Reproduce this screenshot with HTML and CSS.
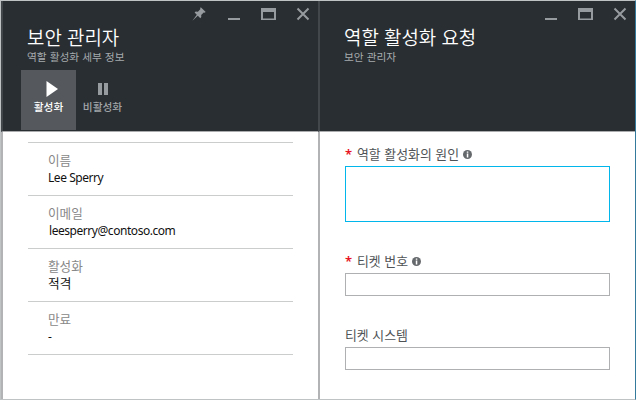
FILE: index.html
```html
<!DOCTYPE html>
<html lang="ko">
<head>
<meta charset="utf-8">
<title>보안 관리자</title>
<link rel="stylesheet" href="styles.css">
</head>
<body>
<main class="workspace">
  <section class="blade blade-details">
    <header class="blade-header">
      <div class="window-controls">
        <svg class="control pin" width="14" height="14" viewBox="0 0 14 14"><path d="M8.8 0.2 13.7 5.1 12.4 5.7 11.7 5.4 9.2 8 9.3 10.1 8.3 11.2 5.8 8.8 0.4 13.8 4.8 7.7 2.6 5.5 3.7 4.6 5.9 4.7 8.5 2.1 8.1 1.3Z"/></svg>
        <svg class="control" width="14" height="14" viewBox="0 0 14 14"><path d="M1 11h12v2H1z"/></svg>
        <svg class="control" width="15" height="14" viewBox="0 0 15 14"><path fill-rule="evenodd" d="M0 1h15v12H0zM2 5v6.5h11V5z"/></svg>
        <svg class="control" width="14" height="14" viewBox="0 0 14 14"><path class="cross" d="M1.5 1.5 12.5 12.5M12.5 1.5 1.5 12.5"/></svg>
      </div>
      <h1 class="title">보안 관리자</h1>
      <p class="subtitle">역할 활성화 세부 정보</p>
      <nav class="commands">
        <button class="command active">
          <svg width="12" height="16" viewBox="0 0 12 16"><path d="M0.5 0 12 8 0.5 16Z"/></svg>
          <span>활성화</span>
        </button>
        <button class="command">
          <svg width="10" height="16" viewBox="0 0 10 16"><path d="M0 2h4v12H0zM6 2h4v12H6z"/></svg>
          <span>비활성화</span>
        </button>
      </nav>
    </header>
    <dl class="properties">
      <div class="property"><dt>이름</dt><dd>Lee Sperry</dd></div>
      <div class="property"><dt>이메일</dt><dd class="email">leesperry@contoso.com</dd></div>
      <div class="property"><dt>활성화</dt><dd class="korean">적격</dd></div>
      <div class="property"><dt>만료</dt><dd>-</dd></div>
    </dl>
  </section>
  <section class="blade blade-request">
    <header class="blade-header">
      <div class="window-controls">
        <svg class="control" width="14" height="14" viewBox="0 0 14 14"><path d="M1 11h12v2H1z"/></svg>
        <svg class="control" width="15" height="14" viewBox="0 0 15 14"><path fill-rule="evenodd" d="M0 1h15v12H0zM2 5v6.5h11V5z"/></svg>
        <svg class="control" width="14" height="14" viewBox="0 0 14 14"><path class="cross" d="M1.5 1.5 12.5 12.5M12.5 1.5 1.5 12.5"/></svg>
      </div>
      <h1 class="title">역할 활성화 요청</h1>
      <p class="subtitle">보안 관리자</p>
    </header>
    <form class="request-form">
      <div class="field">
        <div class="label"><span class="required">*</span><label for="reason">역할 활성화의 원인</label>
          <svg class="info" width="9" height="9" viewBox="0 0 9 9"><circle cx="4.5" cy="4.5" r="4.5"/><path d="M3.8 1.5h1.5v1.3H3.8zM3.8 3.6h1.5v3.8H3.8z"/></svg></div>
        <textarea id="reason" class="input reason"></textarea>
      </div>
      <div class="field">
        <div class="label"><span class="required">*</span><label for="ticket">티켓 번호</label>
          <svg class="info" width="9" height="9" viewBox="0 0 9 9"><circle cx="4.5" cy="4.5" r="4.5"/><path d="M3.8 1.5h1.5v1.3H3.8zM3.8 3.6h1.5v3.8H3.8z"/></svg></div>
        <input id="ticket" class="input" type="text">
      </div>
      <div class="field">
        <div class="label"><label for="system">티켓 시스템</label></div>
        <input id="system" class="input" type="text">
      </div>
    </form>
  </section>
</main>
</body>
</html>
```
FILE: styles.css
```css
* { box-sizing: border-box; margin: 0; padding: 0; }

body {
  font-family: "Noto Sans CJK KR", sans-serif;
  background: #fff;
}

.workspace {
  display: grid;
  grid-template-columns: 317px 317px;
  width: 636px;
  height: 400px;
  overflow: hidden;
  border: 1px solid #c0c3c3;
  border-right-color: #337a9c;
}

.blade {
  border-left: 2px solid #b2b3b4;
}

.blade-header {
  height: 131px;
  margin-left: -2px;
  border-left: 2px solid #41474b;
  border-bottom: 1px solid #aaacae;
  background: #292e32;
  color: #fff;
}

.window-controls {
  display: flex;
  justify-content: flex-end;
  align-items: center;
  height: 26px;
  padding-right: 8px;
  gap: 20px;
}

.control { fill: #969b9f; }
.pin { margin-right: 1px; }
.cross { fill: none; stroke: #969b9f; stroke-width: 2; }

.title {
  height: 22px;
  padding-left: 24px;
  line-height: 20px;
  font-size: 18.9px;
  font-weight: 350;
  white-space: nowrap;
}

.subtitle {
  height: 15px;
  padding-left: 24px;
  line-height: 16px;
  font-size: 10.7px;
  color: #a6abae;
}

.commands {
  display: flex;
  margin: 6px 0 0 18px;
}

.command {
  display: flex;
  flex-direction: column;
  align-items: center;
  width: 55px;
  height: 60px;
  padding-top: 11px;
  border: 0;
  background: none;
  color: #a0a4a7;
  fill: #969b9f;
  font: 500 10.7px/16px "Noto Sans CJK KR", sans-serif;
  white-space: nowrap;
}

.command + .command { width: 53px; }
.command span { margin-top: 2px; }
.command.active { background: #55585d; color: #fff; fill: #fff; }
.command.active svg { margin-left: 6px; }

.properties {
  width: 265px;
  margin: 10px 0 0 25px;
  border-top: 1px solid #cbcccc;
}

.property {
  height: 53px;
  padding: 8px 0 0 20px;
  border-bottom: 1px solid #cbcccc;
}

.property dt {
  height: 18px;
  line-height: 18px;
  font-size: 12.6px;
  color: #888;
}

.property dd {
  height: 18px;
  line-height: 17px;
  font-family: "Noto Sans", "Noto Sans CJK KR", sans-serif;
  font-size: 12px;
  letter-spacing: -0.45px;
  color: #111;
}

.property .email { padding-left: 1px; }

.property .korean {
  font-size: 12.7px;
  letter-spacing: 0;
}

.request-form {
  padding: 13px 25px 0;
}

.field { margin-bottom: 30px; }

.label {
  display: flex;
  align-items: center;
  height: 21px;
  padding-bottom: 3px;
  line-height: 18px;
  font-size: 12.9px;
  color: #505356;
}

.required {
  width: 12px;
  color: #e81123;
  font: 600 13px/18px "Noto Sans", sans-serif;
}

.info { margin-left: 4px; fill: #66696c; }
.info path { fill: #fff; }

.input {
  display: block;
  width: 265px;
  height: 23px;
  border: 1px solid #afb0b1;
  outline: 0;
  background: #fff;
  resize: none;
}

.reason { height: 56px; border-color: #00b6eb; }
```
